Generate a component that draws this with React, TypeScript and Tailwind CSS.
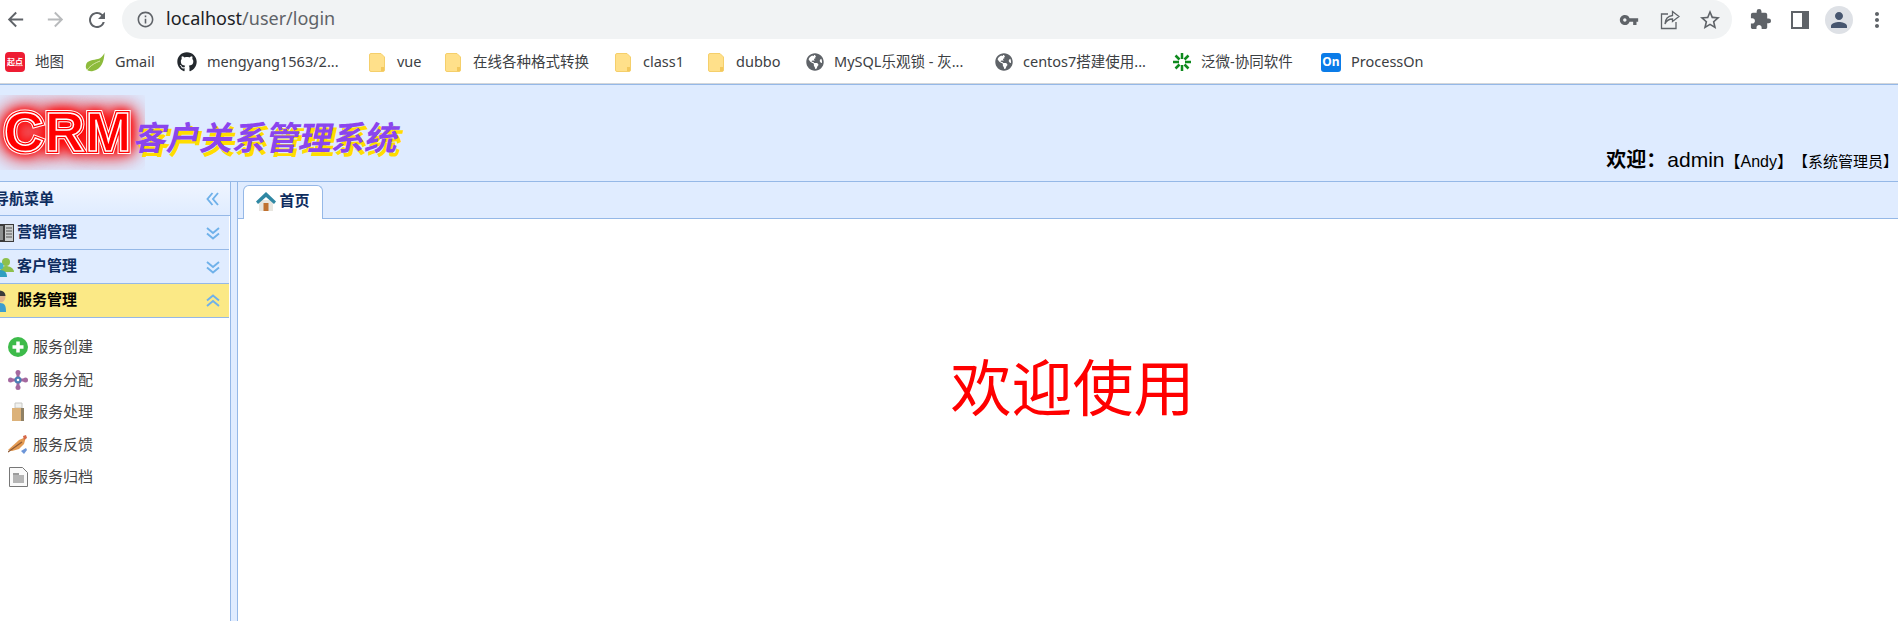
import type { ReactNode } from "react";
import { FaGithub, FaGlobeAmericas } from "react-icons/fa";
import {
  MdArrowBack,
  MdArrowForward,
  MdExtension,
  MdInfoOutline,
  MdMoreVert,
  MdPerson,
  MdRefresh,
  MdStarBorder,
  MdVpnKey,
} from "react-icons/md";

function Folder() {
  return (
    <svg width="16" height="19" viewBox="0 0 16 19" className="mr-[2px] shrink-0">
      <path d="M2 .5h10l3.500 3.500v13a1.500 1.500 0 0 1-1.500 1.500H2A1.500 1.500 0 0 1 .5 17V2A1.500 1.500 0 0 1 2 .5z" fill="#ffe08a" stroke="#f5cf6b" />
      <rect x="12" y="14" width="3" height="4" fill="#f3c85c" />
    </svg>
  );
}

function Leaf() {
  return (
    <svg width="20" height="20" viewBox="0 0 20 20" className="shrink-0">
      <path d="M19.500 1C19 9 17 17 8 19 3 20 0 17 1 13 2 8 9 8 13 7c3-.8 5-3 6.500-6z" fill="#8dbb3c" />
      <path d="M2 18C6 13 10 11 15 9" stroke="#d8e8a8" strokeWidth="1" fill="none" />
    </svg>
  );
}

function Burst() {
  return (
    <svg width="18" height="18" viewBox="0 0 18 18" className="shrink-0">
      <g stroke="#0f8a1e" strokeWidth="2.500" fill="none">
        <path d="M9 0v6M9 12v6M0 9h6M12 9h6M2.500 2.500l4 4M11.500 11.500l4 4M15.500 2.500l-4 4M6.500 11.500l-4 4" />
      </g>
    </svg>
  );
}

const bookmarks: { label: string; width: string; icon: ReactNode }[] = [
  {
    label: "地图",
    width: "w-[80px]",
    icon: (
      <span className="flex h-[20px] w-[20px] shrink-0 items-center justify-center rounded-[4px] bg-[#ee1c33] text-[8px] font-bold leading-none text-white">
        起点
      </span>
    ),
  },
  { label: "Gmail", width: "w-[92px]", icon: <Leaf /> },
  { label: "mengyang1563/2...", width: "w-[192px]", icon: <FaGithub className="shrink-0 text-[20px] text-[#24292e]" /> },
  { label: "vue", width: "w-[76px]", icon: <Folder /> },
  { label: "在线各种格式转换", width: "w-[170px]", icon: <Folder /> },
  { label: "class1", width: "w-[93px]", icon: <Folder /> },
  { label: "dubbo", width: "w-[98px]", icon: <Folder /> },
  { label: "MySQL乐观锁 - 灰...", width: "w-[189px]", icon: <FaGlobeAmericas className="shrink-0 text-[18px] text-[#5f6368]" /> },
  { label: "centos7搭建使用...", width: "w-[178px]", icon: <FaGlobeAmericas className="shrink-0 text-[18px] text-[#5f6368]" /> },
  { label: "泛微-协同软件", width: "w-[148px]", icon: <Burst /> },
  {
    label: "ProcessOn",
    width: "w-[110px]",
    icon: (
      <span className="flex h-[19px] w-[20px] shrink-0 items-center justify-center rounded-[3px] bg-[#0b7ce8] text-[12px] font-bold leading-none text-white">
        On
      </span>
    ),
  },
];

function BrowserBar() {
  return (
    <div className="bg-white">
      <div className="flex h-[39px] items-center">
        <div className="flex h-[39px] w-[122px] items-center pl-[4px] text-[#5f6368]">
          <MdArrowBack className="text-[23px]" />
          <MdArrowForward className="ml-[17px] text-[23px] text-[#b8babc]" />
          <MdRefresh className="ml-[18px] text-[24px]" />
        </div>
        <div className="flex h-[39px] w-[1610px] items-center rounded-[20px] bg-[#f1f3f4] pl-[14px] pr-[10px]">
          <MdInfoOutline className="text-[19px] text-[#5f6368]" />
          <span className="ml-[11px] pb-[2px] font-['Noto_Sans',sans-serif] text-[18px] text-[#202124]">
            localhost<span className="text-[#5f6368]">/user/login</span>
          </span>
          <div className="ml-auto flex items-center text-[#5f6368]">
            <MdVpnKey className="text-[20px]" />
            <svg width="20" height="20" viewBox="0 0 20 20" className="ml-[21px]" fill="none" stroke="#5f6368" strokeWidth="1.300">
              <path d="M8 4H1.500v14.500H16V12" />
              <path d="M12.500 1.500 19 6.500l-6.500 5V9C9 9 6.500 10.500 5 14c.3-5 3-8 7.500-8.500z" />
            </svg>
            <MdStarBorder className="ml-[18px] text-[24px]" />
          </div>
        </div>
        <div className="flex flex-1 items-center text-[#5f6368]">
          <MdExtension className="ml-[17px] text-[23px]" />
          <svg width="18" height="18" viewBox="0 0 18 18" className="ml-[19px]">
            <path d="M0 0h18v18H0z" fill="#5f6368" />
            <path d="M2 2h9v14H2z" fill="#fff" />
          </svg>
          <div className="ml-[16px] flex h-[28px] w-[28px] items-center justify-center rounded-full bg-[#dee1e6] text-[#47566f]">
            <MdPerson className="text-[24px]" />
          </div>
          <MdMoreVert className="ml-[12px] text-[24px]" />
        </div>
      </div>
      <div className="flex h-[45px] items-center border-b border-[#d3d6da] pl-[5px] pt-[2px] font-['Noto_Sans','Noto_Sans_CJK_SC',sans-serif] text-[14.500px] text-[#3c4043]">
        {bookmarks.map((b) => (
          <div key={b.label} className={`flex items-center gap-[10px] ${b.width}`}>
            {b.icon}
            <span className="whitespace-nowrap">{b.label}</span>
          </div>
        ))}
      </div>
    </div>
  );
}

function Chevrons({ dir }: { dir: "left" | "down" | "up" }) {
  const rotate = dir === "left" ? "rotate-90" : dir === "up" ? "rotate-180" : "";
  return (
    <svg width="14" height="14" viewBox="0 0 14 14" className={`shrink-0 ${rotate}`} fill="none" stroke="#6fb1ea" strokeWidth="1.900">
      <path d="M1 2l6 5 6-5M1 7.500l6 5 6-5" />
    </svg>
  );
}

function BookIcon() {
  return (
    <svg width="20" height="20" viewBox="0 0 20 20" className="shrink-0">
      <path d="M0 1h20v18H0z" fill="#3b3b3b" />
      <path d="M1 3h8v14H1z" fill="#8c8f8f" />
      <path d="M11 2h8v16h-8z" fill="#c9cccc" />
      <path d="M12 5h6M12 8h6M12 11h6M12 14h6" stroke="#555" strokeWidth="1" />
    </svg>
  );
}

function UsersIcon() {
  return (
    <svg width="20" height="20" viewBox="0 0 20 20" className="shrink-0">
      <circle cx="12" cy="5" r="4" fill="#8ec04c" />
      <path d="M6 15c0-4 3-6 6-6s8 2 8 6z" fill="#8ec04c" />
      <circle cx="6" cy="9" r="3.500" fill="#45b3c9" />
      <path d="M-2 20c0-4 3-7 8-7s7 3 7 7z" fill="#2f9fc0" />
    </svg>
  );
}

function AgentIcon() {
  return (
    <svg width="20" height="24" viewBox="0 0 20 24" className="shrink-0">
      <circle cx="6" cy="8" r="5.500" fill="#e3b48f" />
      <path d="M.5 7a5.500 5.500 0 0 1 11 0z" fill="#3a3a3a" />
      <path d="M-3 23c0-7 4-9 9-9s6 3 6 9z" fill="#3d9ed0" />
    </svg>
  );
}

function SectionHead({ title, icon, open }: { title: string; icon: ReactNode; open?: boolean }) {
  return (
    <div
      className={`flex h-[34px] items-center border-b border-[#95b8e7] pr-[9px] text-[15px] font-bold ${
        open ? "bg-[#fbe986] text-black" : "bg-[#e0ecff] text-[#0e2d5f]"
      }`}
    >
      <div className="-ml-[6px] flex items-center">{icon}</div>
      <span className="ml-[3px]">{title}</span>
      <div className="ml-auto">
        <Chevrons dir={open ? "up" : "down"} />
      </div>
    </div>
  );
}

function PlusIcon() {
  return (
    <svg width="20" height="20" viewBox="0 0 20 20">
      <circle cx="10" cy="10" r="10" fill="#3dbb4a" />
      <path d="M10 4.500v11M4.500 10h11" stroke="#fff" strokeWidth="3.500" />
    </svg>
  );
}

function FlowIcon() {
  return (
    <svg width="20" height="20" viewBox="0 0 20 20">
      <path d="M10 1v18M1 10h18" stroke="#a4689f" strokeWidth="3" />
      <circle cx="10" cy="2.500" r="2.500" fill="#a4689f" />
      <circle cx="10" cy="17.500" r="2.500" fill="#a4689f" />
      <circle cx="2.500" cy="10" r="2.500" fill="#a4689f" />
      <circle cx="17.500" cy="10" r="2.500" fill="#a4689f" />
      <circle cx="10" cy="10" r="3.500" fill="#4b7fb5" />
      <circle cx="10" cy="10" r="1.300" fill="#fff" />
    </svg>
  );
}

function BagIcon() {
  return (
    <svg width="20" height="20" viewBox="0 0 20 20">
      <path d="M7 1h7v5H7z" fill="#f1f1ee" stroke="#c8c8c4" />
      <path d="M4 6h12v13H4z" fill="#dcb27a" />
      <path d="M13 6h3v13h-3z" fill="#8f8064" />
    </svg>
  );
}

function QuillIcon() {
  return (
    <svg width="20" height="20" viewBox="0 0 20 20">
      <path d="M0 15 11 5l7-3-2 7-5 5-7 2z" fill="#e39a52" />
      <path d="M0 17 14 7" stroke="#8f5a34" strokeWidth="1.200" />
      <path d="M15 1l3-1 1 3-3 2z" fill="#d5694a" />
      <path d="M13 16l5-3 1 2-3 4z" fill="#6c95d8" />
    </svg>
  );
}

function DocIcon() {
  return (
    <svg width="19" height="20" viewBox="0 0 19 20">
      <path d="M.5.5h13l5 5v14H.5z" fill="#fafafa" stroke="#777" />
      <path d="M4 8h11v8H4z" fill="#b5b5b5" />
      <path d="M4 6h6v2H4z" fill="#9c9c9c" />
    </svg>
  );
}

const serviceItems: { label: string; icon: ReactNode }[] = [
  { label: "服务创建", icon: <PlusIcon /> },
  { label: "服务分配", icon: <FlowIcon /> },
  { label: "服务处理", icon: <BagIcon /> },
  { label: "服务反馈", icon: <QuillIcon /> },
  { label: "服务归档", icon: <DocIcon /> },
];

function Sidebar() {
  return (
    <aside className="flex w-[231px] shrink-0 flex-col border-r border-[#95b8e7] bg-white">
      <div className="flex h-[34px] items-center border-b border-[#95b8e7] bg-gradient-to-b from-[#eff5ff] to-[#e0ecff] pr-[10px] pt-[1px] text-[15px] font-bold text-[#0e2d5f]">
        <span className="-ml-[6px]">导航菜单</span>
        <div className="ml-auto">
          <Chevrons dir="left" />
        </div>
      </div>
      <div className="mr-px flex flex-col">
        <SectionHead title="营销管理" icon={<BookIcon />} />
        <SectionHead title="客户管理" icon={<UsersIcon />} />
        <SectionHead title="服务管理" icon={<AgentIcon />} open />
      </div>
      <ul className="flex flex-col gap-[12.600px] pl-[8px] pt-[19px] text-[15px] leading-[20px] text-[#444]">
        {serviceItems.map((item) => (
          <li key={item.label} className="flex items-center gap-[5px]">
            <span className="flex w-[20px] justify-center">{item.icon}</span>
            {item.label}
          </li>
        ))}
      </ul>
    </aside>
  );
}

function HomeIcon() {
  return (
    <svg width="20" height="20" viewBox="0 0 20 20" className="shrink-0">
      <path d="M3 8h14v11H3z" fill="#e8e6df" />
      <path d="M7.500 11h5v8h-5z" fill="#c0712f" />
      <path d="M10 0 0 9.500 2 12l8-7 8 7 2-2.500z" fill="#2f87a3" />
    </svg>
  );
}

export default function App() {
  return (
    <div className="flex h-[621px] w-[1898px] flex-col overflow-hidden bg-white font-['Liberation_Sans','Noto_Sans_CJK_SC',sans-serif]">
      <BrowserBar />
      <header className="flex h-[98px] items-end justify-between border-y border-[#95b8e7] bg-[#deebff]">
        <div className="mb-[11px] flex items-center self-end">
          <div className="flex h-[75px] w-[145px] items-center overflow-hidden pl-[4px]">
            <span className="relative text-[55px] font-bold leading-none tracking-[1px] text-[#f00] [-webkit-text-stroke:6px_#fff] [text-shadow:0_0_8px_#f00,0_0_12px_#f00,0_0_16px_#f00,0_0_20px_#f00,0_0_24px_#f00,0_0_28px_#f00] before:absolute before:left-0 before:top-0 before:content-['CRM'] before:[-webkit-text-stroke:4px_#f00] before:[text-shadow:none] after:absolute after:left-0 after:top-0 after:content-['CRM'] after:[-webkit-text-stroke:1.500px_#fff] after:[text-shadow:none]">
              CRM
            </span>
          </div>
          <span className="-ml-[10px] mt-[12px] -skew-x-12 whitespace-nowrap text-[33px] font-bold leading-none text-[#8a45ee] [text-shadow:4px_4px_0_#ffdd00]">
            客户关系管理系统
          </span>
        </div>
        <div className="mb-[6px] flex items-baseline text-black">
          <span className="text-[20px] font-bold">欢迎：</span>
          <span className="ml-[1px] text-[21px]">admin</span>
          <span className="text-[16px]">【Andy】</span>
          <span className="text-[15px]">【系统管理员】</span>
        </div>
      </header>
      <div className="flex flex-1">
        <Sidebar />
        <div className="w-[6px] shrink-0 bg-[#e0ecff]" />
        <main className="flex flex-1 flex-col border-l border-[#95b8e7]">
          <div className="flex h-[37px] items-end border-b border-[#95b8e7] bg-[#e0ecff] pl-[5px]">
            <div className="-mb-px flex h-[34px] w-[80px] items-center justify-center gap-[3px] rounded-t-[6px] border border-b-0 border-[#95b8e7] bg-white pb-[2px] text-[15px] font-bold text-[#0e2d5f]">
              <HomeIcon />
              首页
            </div>
          </div>
          <div className="flex flex-1 items-center justify-center pb-[60px] pl-[9px]">
            <h1 className="text-[61px] leading-none text-[#f00]">欢迎使用</h1>
          </div>
        </main>
      </div>
    </div>
  );
}
